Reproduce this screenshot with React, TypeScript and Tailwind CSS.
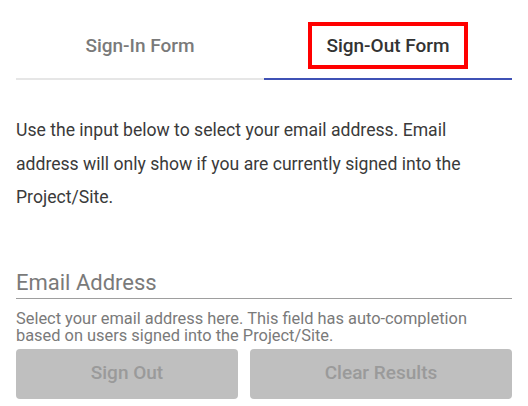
import React from "react";

export default function App() {
  return (
    <div className="w-[528px] h-[406px] bg-white px-4 overflow-hidden" style={{ fontFamily: "Roboto, 'Liberation Sans', sans-serif" }}>
      <div className="flex mt-[12px]">
        <button className="flex-1 h-[68px] flex items-center justify-center border-b-2 border-[#e6e6e6] text-[19px] font-medium text-[#7a7a7a]">
          <span className="mt-[2px]">Sign-In Form</span>
        </button>
        <button className="flex-1 h-[68px] flex items-center justify-center border-b-2 border-[#3f51b5] text-[19px] font-medium text-[#333333]">
          <span className="border-4 border-[#ff0000] px-[14px] py-[7px] leading-[25px]">Sign-Out Form</span>
        </button>
      </div>
      <p className="mt-[34px] text-[17.6px] leading-[33.5px] text-[#3a3a3a]">
        Use the input below to select your email address. Email address will only show if you are currently signed into the Project/Site.
      </p>
      <div className="mt-[55px] border-b border-[#9e9e9e] pb-[2px]">
        <div className="text-[22px] leading-[26px] text-[#7a7a7a]">Email Address</div>
      </div>
      <p className="mt-[11px] text-[16.4px] leading-[17px] text-[#7a7a7a]">
        Select your email address here. This field has auto-completion based on users signed into the Project/Site.
      </p>
      <div className="flex gap-3 mt-[5px]">
        <button className="flex-auto h-[50px] rounded bg-[#bfbfbf] text-[19px] font-medium text-[#9a9a9a]">Sign Out</button>
        <button className="flex-auto h-[50px] rounded bg-[#bfbfbf] text-[19px] font-medium text-[#9a9a9a]">Clear Results</button>
      </div>
    </div>
  );
}
